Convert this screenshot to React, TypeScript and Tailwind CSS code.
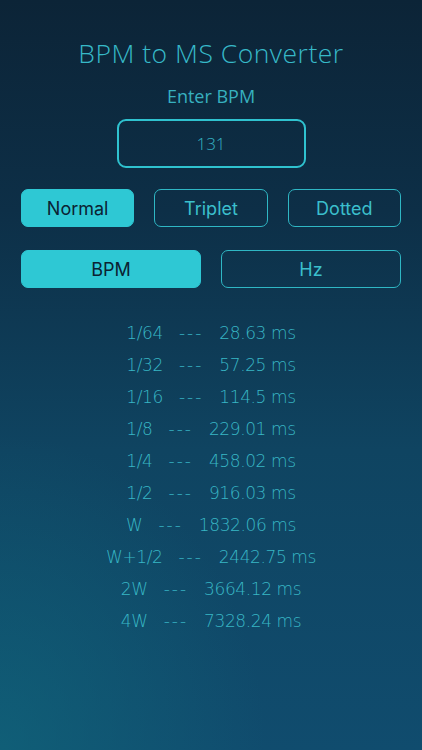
import { useState } from "react";

const rows: [string, string][] = [
    ["1/64", "28.63 ms"],
    ["1/32", "57.25 ms"],
    ["1/16", "114.5 ms"],
    ["1/8", "229.01 ms"],
    ["1/4", "458.02 ms"],
    ["1/2", "916.03 ms"],
    ["W", "1832.06 ms"],
    ["W+1/2", "2442.75 ms"],
    ["2W", "3664.12 ms"],
    ["4W", "7328.24 ms"],
];

export default function App() {
    const [mode, setMode] = useState("Normal");
    const [unit, setUnit] = useState("BPM");

    const btn = (active: boolean) =>
        active
            ? "h-[38px] rounded-[7px] bg-[#2ec8d4] text-[#0b2232] border border-[#2ec8d4]"
            : "h-[38px] rounded-[7px] border border-[#2fb7c4] text-[#3bbfcc]";

    return (
        <div className="relative w-[422px] h-[750px] overflow-hidden bg-[linear-gradient(180deg,#0c2437_0%,#0d2f47_28%,#0f4461_60%,#104c6e_100%)]">
            <div className="absolute inset-0 bg-[radial-gradient(ellipse_90%_60%_at_0%_100%,rgba(16,104,124,0.65),rgba(16,104,124,0)_70%)]" />
            <div className="relative flex flex-col items-center font-['Open_Sans',sans-serif]">
                <h1 className="mt-[36px] text-[26.5px] leading-[34px] font-light text-[#37b9c8] tracking-[0.5px]">
                    BPM to MS Converter
                </h1>
                <div className="mt-[14px] text-[18px] leading-[24px] text-[#37b0bf]">
                    Enter BPM
                </div>
                <div className="mt-[11px] w-[189px] h-[49px] rounded-[9px] border-2 border-[#2fc2cf] flex items-center justify-center text-[17px] font-light text-[#35b3c2]">
                    131
                </div>

                <div className="mt-[21px] w-full px-[21px] grid grid-cols-3 gap-x-[20px] text-[18px] font-['Inter',sans-serif]">
                    {["Normal", "Triplet", "Dotted"].map((m) => (
                        <button key={m} onClick={() => setMode(m)} className={btn(mode === m)}>
                            {m}
                        </button>
                    ))}
                </div>
                <div className="mt-[23px] w-full px-[21px] grid grid-cols-2 gap-x-[20px] text-[18px] font-['Inter',sans-serif]">
                    {["BPM", "Hz"].map((u) => (
                        <button key={u} onClick={() => setUnit(u)} className={btn(unit === u)}>
                            {u}
                        </button>
                    ))}
                </div>

                <div className="mt-[29px] flex flex-col items-center text-[17px] leading-[32px] font-light text-[#38b7c5] font-['DejaVu_Sans',sans-serif]">
                    {rows.map(([label, value]) => (
                        <div key={label} className="flex gap-[16px] tracking-[-0.4px]">
                            <span>{label}</span>
                            <span className="tracking-[2px]">---</span>
                            <span>{value}</span>
                        </div>
                    ))}
                </div>
            </div>
        </div>
    );
}
